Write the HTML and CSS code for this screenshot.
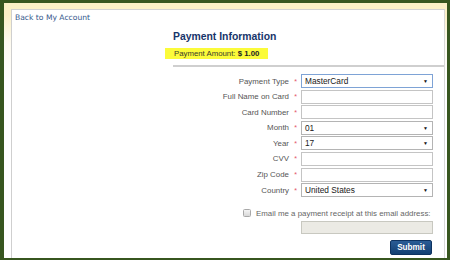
FILE: index.html
```html
<!DOCTYPE html>
<html>
<head>
<meta charset="utf-8">
<link rel="stylesheet" href="styles.css">
</head>
<body>
<div class="frame">
  <div class="panel">
    <a class="back" href="#">Back to My Account</a>
    <div class="main">
      <h1 class="title">Payment Information</h1>
      <div class="amount">Payment Amount: <b>$ 1.00</b></div>
      <div class="rule"></div>
      <form class="form">
        <label class="lbl">Payment Type</label><span class="req">*</span>
        <div class="sel focus"><span class="val">MasterCard</span><span class="arr">&#9660;</span></div>
        <label class="lbl">Full Name on Card</label><span class="req">*</span>
        <input class="field" type="text">
        <label class="lbl">Card Number</label><span class="req">*</span>
        <input class="field" type="text">
        <label class="lbl">Month</label><span class="req">*</span>
        <div class="sel"><span class="val">01</span><span class="arr">&#9660;</span></div>
        <label class="lbl">Year</label><span class="req">*</span>
        <div class="sel"><span class="val">17</span><span class="arr">&#9660;</span></div>
        <label class="lbl">CVV</label><span class="req">*</span>
        <input class="field" type="text">
        <label class="lbl">Zip Code</label><span class="req">*</span>
        <input class="field" type="text">
        <label class="lbl">Country</label><span class="req">*</span>
        <div class="sel"><span class="val">United States</span><span class="arr">&#9660;</span></div>
      </form>
      <div class="check-row"><span class="box"></span><span class="check-text">Email me a payment receipt at this email address:</span></div>
      <div class="email"></div>
      <div class="actions"><button class="submit" type="button">Submit</button></div>
    </div>
  </div>
</div>
</body>
</html>
```
FILE: styles.css
```css
html, body {
  margin: 0;
  padding: 0;
  background: #fff;
}
.frame {
  width: 450px;
  height: 260px;
  box-sizing: border-box;
  border: 3px solid #37561f;
  border-left-width: 4px;
  border-bottom-width: 2px;
  background: linear-gradient(#fbf0c6 0, #fbf0c6 12px, #fdfaf0 40px, #ffffff 80px);
  padding: 6px 2px 0 7px;
  display: flex;
}
.panel {
  flex: 1;
  background: #fff;
  border-top: 1px solid #d2d2d2;
  border-left: 1px solid #cfcfcf;
  border-right: 1px solid #d8d8d8;
  padding: 3px 0 0 3px;
  display: flex;
  flex-direction: column;
  align-items: flex-start;
}
.back {
  font-family: "DejaVu Sans", Verdana, sans-serif;
  font-size: 7.6px;
  line-height: 10px;
  color: #35598c;
  text-decoration: none;
}
.main {
  margin-left: 158px;
  align-self: stretch;
  font-family: "Liberation Sans", Arial, sans-serif;
}
.title {
  margin: 7px 0 0 0;
  font-size: 10.4px;
  line-height: 14px;
  font-weight: bold;
  color: #17356a;
}
.amount {
  margin: 4px 0 0 -8px;
  width: 94px;
  padding-left: 9px;
  background: #fbfb3a;
  font-size: 7.8px;
  line-height: 11px;
  color: #3a3a2a;
}
.amount b {
  color: #222;
}
.rule {
  margin-top: 6px;
  height: 2px;
  background: #cfcfcf;
}
.form {
  margin: 7px 0 0 0;
  display: grid;
  grid-template-columns: 116px 12px 132px;
  grid-auto-rows: 14px;
  row-gap: 1.6px;
  align-items: center;
}
.lbl {
  text-align: right;
  font-size: 7.9px;
  color: #555;
  white-space: nowrap;
}
.req {
  color: #e4556a;
  font-size: 7px;
  text-align: center;
  padding-left: 1px;
}
.field {
  box-sizing: border-box;
  width: 132px;
  height: 14px;
  margin: 0;
  border: 1px solid #c4c4c4;
  background: #fff;
  padding: 0;
}
.sel {
  position: relative;
  box-sizing: border-box;
  width: 132px;
  height: 14px;
  border: 1px solid #b4b4b4;
  background: #fff;
  display: flex;
  align-items: center;
  padding-left: 3px;
}
.sel.focus {
  border-color: #7ea3d6;
}
.val {
  font-size: 8.3px;
  color: #1a1a1a;
}
.arr {
  position: absolute;
  right: 4px;
  top: 3px;
  font-size: 5px;
  line-height: 6px;
  color: #111;
}
.check-row {
  margin: 11px 0 0 70px;
  display: flex;
  align-items: center;
  height: 10px;
}
.box {
  box-sizing: border-box;
  width: 8px;
  height: 8px;
  border: 1px solid #a8a8a8;
  border-radius: 1.5px;
  background: linear-gradient(#f4f4f4, #d8d8d8);
  margin-right: 5px;
}
.check-text {
  font-size: 7.9px;
  color: #666;
  white-space: nowrap;
}
.email {
  margin: 3px 0 0 128px;
  box-sizing: border-box;
  width: 132px;
  height: 13px;
  border: 1px solid #c8c8c0;
  background: #ebeae4;
}
.actions {
  margin: 6px 0 0 217px;
  display: flex;
}
.submit {
  display: block;
  box-sizing: border-box;
  width: 42px;
  height: 15px;
  padding: 0;
  border: 1px solid #0d3260;
  border-radius: 2px;
  background: linear-gradient(#2a5c95, #123f72);
  color: #fff;
  font-family: "Liberation Sans", Arial, sans-serif;
  font-weight: bold;
  font-size: 8.2px;
  line-height: 13px;
}
```
